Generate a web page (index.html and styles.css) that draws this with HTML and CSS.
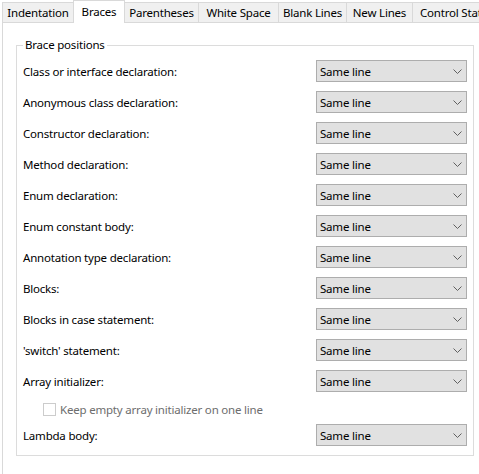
FILE: index.html
```html
<!DOCTYPE html>
<html>
<head>
<meta charset="utf-8">
<link rel="stylesheet" href="styles.css">
</head>
<body>
<div class="tabs">
  <div class="tab t-ind">Indentation</div>
  <div class="tab t-br sel">Braces</div>
  <div class="tab t-par">Parentheses</div>
  <div class="tab t-ws">White Space</div>
  <div class="tab t-bl">Blank Lines</div>
  <div class="tab t-nl">New Lines</div>
  <div class="tab t-cs">Control Statements</div>
</div>
<div class="pane">
  <fieldset class="group">
    <legend>Brace positions</legend>
    <div class="rows">
      <div class="row"><span class="lbl">Class or interface declaration:</span><div class="combo"><span>Same line</span><svg width="9" height="5" viewBox="0 0 9 5"><path d="M0.5 0.5 L4.5 4.5 L8.5 0.5" fill="none" stroke="#606060" stroke-width="1"/></svg></div></div>
      <div class="row"><span class="lbl">Anonymous class declaration:</span><div class="combo"><span>Same line</span><svg width="9" height="5" viewBox="0 0 9 5"><path d="M0.5 0.5 L4.5 4.5 L8.5 0.5" fill="none" stroke="#606060" stroke-width="1"/></svg></div></div>
      <div class="row"><span class="lbl">Constructor declaration:</span><div class="combo"><span>Same line</span><svg width="9" height="5" viewBox="0 0 9 5"><path d="M0.5 0.5 L4.5 4.5 L8.5 0.5" fill="none" stroke="#606060" stroke-width="1"/></svg></div></div>
      <div class="row"><span class="lbl">Method declaration:</span><div class="combo"><span>Same line</span><svg width="9" height="5" viewBox="0 0 9 5"><path d="M0.5 0.5 L4.5 4.5 L8.5 0.5" fill="none" stroke="#606060" stroke-width="1"/></svg></div></div>
      <div class="row"><span class="lbl">Enum declaration:</span><div class="combo"><span>Same line</span><svg width="9" height="5" viewBox="0 0 9 5"><path d="M0.5 0.5 L4.5 4.5 L8.5 0.5" fill="none" stroke="#606060" stroke-width="1"/></svg></div></div>
      <div class="row"><span class="lbl">Enum constant body:</span><div class="combo"><span>Same line</span><svg width="9" height="5" viewBox="0 0 9 5"><path d="M0.5 0.5 L4.5 4.5 L8.5 0.5" fill="none" stroke="#606060" stroke-width="1"/></svg></div></div>
      <div class="row"><span class="lbl">Annotation type declaration:</span><div class="combo"><span>Same line</span><svg width="9" height="5" viewBox="0 0 9 5"><path d="M0.5 0.5 L4.5 4.5 L8.5 0.5" fill="none" stroke="#606060" stroke-width="1"/></svg></div></div>
      <div class="row"><span class="lbl">Blocks:</span><div class="combo"><span>Same line</span><svg width="9" height="5" viewBox="0 0 9 5"><path d="M0.5 0.5 L4.5 4.5 L8.5 0.5" fill="none" stroke="#606060" stroke-width="1"/></svg></div></div>
      <div class="row"><span class="lbl">Blocks in case statement:</span><div class="combo"><span>Same line</span><svg width="9" height="5" viewBox="0 0 9 5"><path d="M0.5 0.5 L4.5 4.5 L8.5 0.5" fill="none" stroke="#606060" stroke-width="1"/></svg></div></div>
      <div class="row"><span class="lbl">'switch' statement:</span><div class="combo"><span>Same line</span><svg width="9" height="5" viewBox="0 0 9 5"><path d="M0.5 0.5 L4.5 4.5 L8.5 0.5" fill="none" stroke="#606060" stroke-width="1"/></svg></div></div>
      <div class="row"><span class="lbl">Array initializer:</span><div class="combo"><span>Same line</span><svg width="9" height="5" viewBox="0 0 9 5"><path d="M0.5 0.5 L4.5 4.5 L8.5 0.5" fill="none" stroke="#606060" stroke-width="1"/></svg></div></div>
    </div>
    <div class="check"><span class="box"></span><span class="ctext">Keep empty array initializer on one line</span></div>
    <div class="row"><span class="lbl">Lambda body:</span><div class="combo"><span>Same line</span><svg width="9" height="5" viewBox="0 0 9 5"><path d="M0.5 0.5 L4.5 4.5 L8.5 0.5" fill="none" stroke="#606060" stroke-width="1"/></svg></div></div>
  </fieldset>
</div>
</body>
</html>
```
FILE: styles.css
```css
html, body {
  margin: 0;
  padding: 0;
  background: #ffffff;
}
body {
  width: 479px;
  height: 474px;
  overflow: hidden;
  font-family: "Noto Sans", "Open Sans", sans-serif;
  font-size: 11.5px;
  letter-spacing: -0.2px;
  color: #000;
}
.tabs {
  display: flex;
  align-items: flex-end;
  height: 22px;
  padding-left: 2px;
  white-space: nowrap;
  position: relative;
  z-index: 1;
}
.tab {
  box-sizing: border-box;
  height: 20px;
  background: #f0f0f0;
  border: 1px solid #d9d9d9;
  border-right: none;
  border-bottom: none;
  text-align: center;
  line-height: 19px;
  overflow: hidden;
  flex: none;
}
.tab.sel {
  height: 23px;
  margin-bottom: -1px;
  background: #ffffff;
  border-right: 1px solid #d9d9d9;
  line-height: 21px;
}
.t-ind { width: 71px; }
.t-br { width: 52px; }
.t-par { width: 73px; border-left: none; }
.t-ws { width: 80px; }
.t-bl { width: 68px; }
.t-nl { width: 66px; }
.t-cs { width: 90px; text-align: left; padding-left: 7px; }
.pane {
  margin-left: 2px;
  border: 1px solid #d9d9d9;
  border-right: none;
  height: 460px;
  padding: 14px 0 0 13px;
  box-sizing: border-box;
}
.group {
  margin: 0;
  width: 458px;
  box-sizing: border-box;
  border: 1px solid #dcdcdc;
  padding: 7px 6px 9px 6px;
}
.group legend {
  padding: 0 2px;
  margin-left: 0;
  line-height: 16px;
}
.rows {
  display: flex;
  flex-direction: column;
  gap: 9px;
}
.row {
  display: flex;
  align-items: center;
  justify-content: space-between;
  height: 22px;
}
.combo {
  box-sizing: border-box;
  width: 151px;
  height: 22px;
  background: #e1e1e1;
  border: 1px solid #adadad;
  display: flex;
  align-items: center;
  justify-content: space-between;
  padding: 0 4px 0 3px;
}
.combo svg {
  display: block;
}
.check {
  display: flex;
  align-items: center;
  height: 14px;
  margin: 10px 0 8px 20px;
  gap: 4px;
}
.box {
  box-sizing: border-box;
  width: 13px;
  height: 13px;
  border: 1px solid #cccccc;
  background: #fff;
}
.ctext {
  color: #6d6d6d;
}
```
